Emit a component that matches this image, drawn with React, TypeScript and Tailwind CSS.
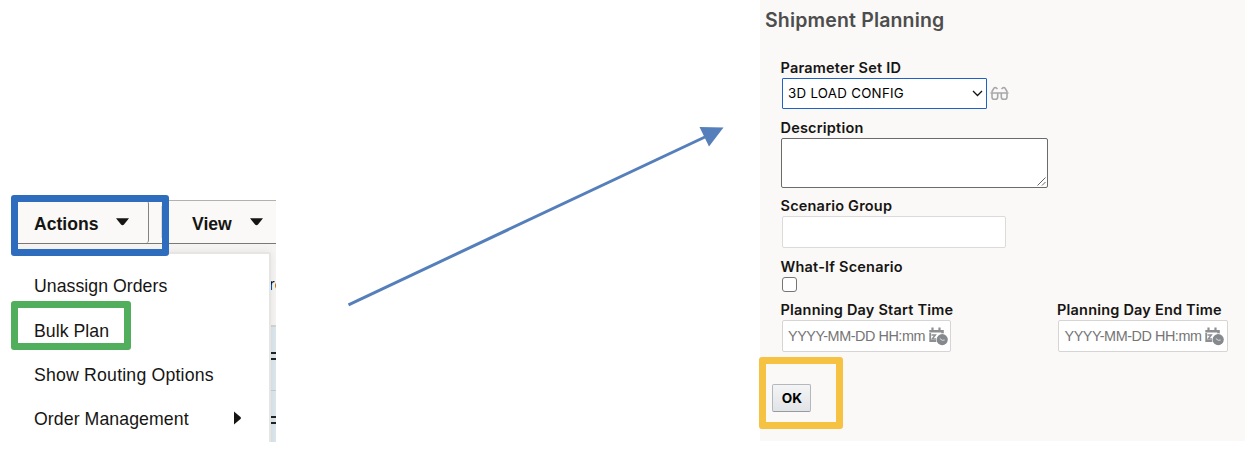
import type { ReactNode } from "react";

const helv = "font-['Liberation_Sans',Arial,sans-serif]";

function CaretDown() {
  return (
    <svg width="13" height="8" viewBox="0 0 13 8" className="shrink-0 fill-[#161513]">
      <path d="M0 0.3H13L8 6.4Q6.5 8 5 6.4Z" />
    </svg>
  );
}

function MenuItem({ children, tracking }: { children: ReactNode; tracking: string }) {
  return (
    <li className="flex h-[44.5px] items-center pl-[17px]">
      <span className={`w-[200px] shrink-0 whitespace-nowrap ${tracking}`}>{children}</span>
    </li>
  );
}

function ActionsPanel() {
  return (
    <section className={`relative mt-[200px] h-[242px] w-[276px] shrink-0 overflow-visible pl-[17px] text-[#161513] ${helv}`}>
      <div className="flex h-[44px] w-[259px] items-center border-y border-t-[#b3b1af] border-b-[#7a7876] bg-[#faf9f7] text-[17.6px] font-bold">
        <div className="flex h-full w-[132px] items-center rounded-[3px] border-r border-[#85827f] pl-[17px]">
          <span className="w-[82px] pt-[4px]">Actions</span>
          <CaretDown />
        </div>
        <div className="ml-[12px] flex h-8 items-center border-l border-[#dddbda] pl-[30px]">
          <span className="w-[58px] pt-[4px]">View</span>
          <CaretDown />
        </div>
      </div>
      <div className="flex h-[198px] w-[259px] overflow-hidden bg-[#f5f4f2] pt-[8px]">
        <div className="relative z-10 h-[198px] w-[254px] shrink-0 rounded-tr-[3px] border-t-2 border-r-2 border-[#e6e5e3] bg-white pt-[10px] shadow-[0_0_8px_rgba(0,0,0,0.07)]">
          <ul className="flex flex-col text-[17.7px]">
            <MenuItem tracking="tracking-[0.04px]">Unassign Orders</MenuItem>
            <MenuItem tracking="pt-px tracking-[0.03px]">Bulk Plan</MenuItem>
            <MenuItem tracking="tracking-[0.19px]">Show Routing Options</MenuItem>
            <li className="flex h-[44px] items-center pl-[17px]">
              <span className="w-[200px] shrink-0 tracking-[0.08px] whitespace-nowrap">Order Management</span>
              <svg width="8" height="14" viewBox="0 0 8 14" className="mb-[3px] fill-[#161513]">
                <path d="M0 0.5L6.5 6Q7.5 7 6.5 8L0 13.5Z" />
              </svg>
            </li>
          </ul>
        </div>
        <div className="flex w-[5px] flex-col overflow-hidden text-[17px]">
          <div className="h-[75px] shrink-0 border-b-2 border-[#d5d3d1] pt-[22px] leading-[22px] text-black">
            <span className="-ml-[2px]">re</span>
          </div>
          <div className="flex h-[64px] shrink-0 flex-col gap-1 border-b border-[#c4ccd3] bg-[#dce6ed] pt-[25px]">
            <i className="h-[2px] bg-[#222]" />
            <i className="h-[2px] bg-[#222]" />
          </div>
          <div className="flex h-[60px] shrink-0 flex-col gap-1 bg-[#dce6ed] pt-[25px]">
            <i className="h-[2px] bg-[#222]" />
            <i className="h-[2px] bg-[#222]" />
          </div>
        </div>
      </div>
      <div className="absolute top-[-5px] left-[11px] z-20 h-[61px] w-[158px] rounded-[3px] border-7 border-[#2e6dbd]" />
      <div className="absolute top-[101px] left-[11px] z-20 h-[49px] w-[120px] rounded-[3px] border-7 border-[#50ae5c]" />
    </section>
  );
}

function Label({ children }: { children: ReactNode }) {
  return <span className="block h-5 text-[14.5px] leading-5 font-semibold tracking-[0.2px] whitespace-nowrap text-[#161513]">{children}</span>;
}

function Glasses() {
  return (
    <svg width="19" height="15" viewBox="0 0 19 15" fill="none" stroke="#a8a8ab" strokeWidth="1.6" className="ml-[3px]">
      <path d="M0.5 7H18.5M2 7V11Q2 13.3 4.2 13.3H5.4Q7.7 13.3 7.7 11V7M11.3 7V11Q11.3 13.3 13.6 13.3H14.8Q17 13.3 17 11V7M1.7 6L4 2.2Q4.5 1.4 6 1.7L7.5 3M17.3 6L15 2.2Q14.5 1.4 13 1.7L11.5 3" />
    </svg>
  );
}

function DateIcon() {
  return (
    <svg width="19" height="19" viewBox="0 0 19 19" className="shrink-0">
      <g fill="none" stroke="#8d8f92">
        <path d="M1.2 6V14H7.5" strokeWidth="1.8" />
        <path d="M0.3 4.2H13.5V6.5" strokeWidth="2.6" />
        <path d="M3.5 0.5V4M10.5 0.5V4" strokeWidth="2.2" />
        <path d="M2.5 8H6.3L3.2 12H7" strokeWidth="1.5" />
      </g>
      <circle cx="13.2" cy="12.6" r="6" fill="#fff" />
      <circle cx="13.2" cy="12.6" r="5.6" fill="#85888c" />
      <path d="M10.8 11.5L13.2 13.3L15.7 13" fill="none" stroke="#dedede" strokeWidth="1" />
    </svg>
  );
}

function DateField({ label }: { label: string }) {
  return (
    <div className="w-[276.5px] shrink-0">
      <Label>{label}</Label>
      <div className={`ml-px flex h-8 w-[169.5px] items-center rounded-[2px] border border-[#d6d5d4] bg-white pl-[5.5px] text-[14.4px] text-[#757575] ${helv}`}>
        <span className="w-[140.5px] pt-px tracking-[-0.45px] whitespace-nowrap">YYYY-MM-DD HH:mm</span>
        <DateIcon />
      </div>
    </div>
  );
}

function ShipmentForm() {
  return (
    <section className="relative h-[441px] w-[485px] shrink-0 overflow-hidden bg-[#faf9f7] font-[Inter,sans-serif]">
      <h1 className="h-[58px] pt-[7px] pl-[5px] text-[19.5px] leading-[26px] font-semibold tracking-[0.16px] whitespace-nowrap text-[#4d4d4d]">Shipment Planning</h1>
      <div className="pl-[20.5px]">
        <Label>Parameter Set ID</Label>
        <div className="flex items-center">
          <div className="ml-px flex h-[31px] w-[205px] items-center rounded-[1px] border border-[#2062c4] bg-white pr-[3px] pl-[5.5px] text-[13.3px] text-black">
            <span className="flex-1 tracking-[0.28px] whitespace-nowrap">3D LOAD CONFIG</span>
            <svg width="11" height="7" viewBox="0 0 11 7" fill="none" stroke="#111" strokeWidth="1.3">
              <path d="M1 1L5.5 5.5L10 1" />
            </svg>
          </div>
          <Glasses />
        </div>
        <div className="mt-[9px]">
          <Label>Description</Label>
          <div className="flex h-[50px] w-[267px] items-end justify-end rounded-[2px] border border-[#6b6b6b] bg-white p-px">
            <svg width="9" height="9" viewBox="0 0 9 9" stroke="#555" strokeWidth="0.9">
              <path d="M0.5 8.5L8.5 0.5M5 8.5L8.5 5" />
            </svg>
          </div>
        </div>
        <div className="mt-2">
          <Label>Scenario Group</Label>
          <div className="ml-px h-8 w-[224px] rounded-[2px] border border-[#dcdbda] bg-white" />
        </div>
        <div className="mt-[9px]">
          <Label>What-If Scenario</Label>
          <div className="ml-px size-[15px] rounded-[3px] border border-[#767676] bg-white" />
        </div>
        <div className="mt-2 flex">
          <DateField label="Planning Day Start Time" />
          <DateField label="Planning Day End Time" />
        </div>
      </div>
      <button className="mt-8 ml-3 flex h-7 w-[39px] items-center justify-center rounded-[2px] border border-[#b5b8bb] border-b-[#989b9e] bg-linear-to-b from-[#f3f4f5] to-[#e1e4e7] pt-px pl-px text-[13.6px] font-bold text-black">OK</button>
    </section>
  );
}

export default function App() {
  return (
    <main className="relative flex h-[476px] w-[1246px] overflow-hidden bg-white">
      <ActionsPanel />
      <svg width="484" height="476" viewBox="276 0 484 476" className="shrink-0">
        <path d="M348.5 304.8L706 136.5" stroke="#557fba" strokeWidth="3" />
        <path d="M699.5 127L723.5 127.5L709 146.5Z" fill="#557fba" />
      </svg>
      <ShipmentForm />
      <div className="absolute top-[357px] left-[759px] h-[72px] w-[84px] rounded-[3px] border-7 border-[#f5c242]" />
    </main>
  );
}
